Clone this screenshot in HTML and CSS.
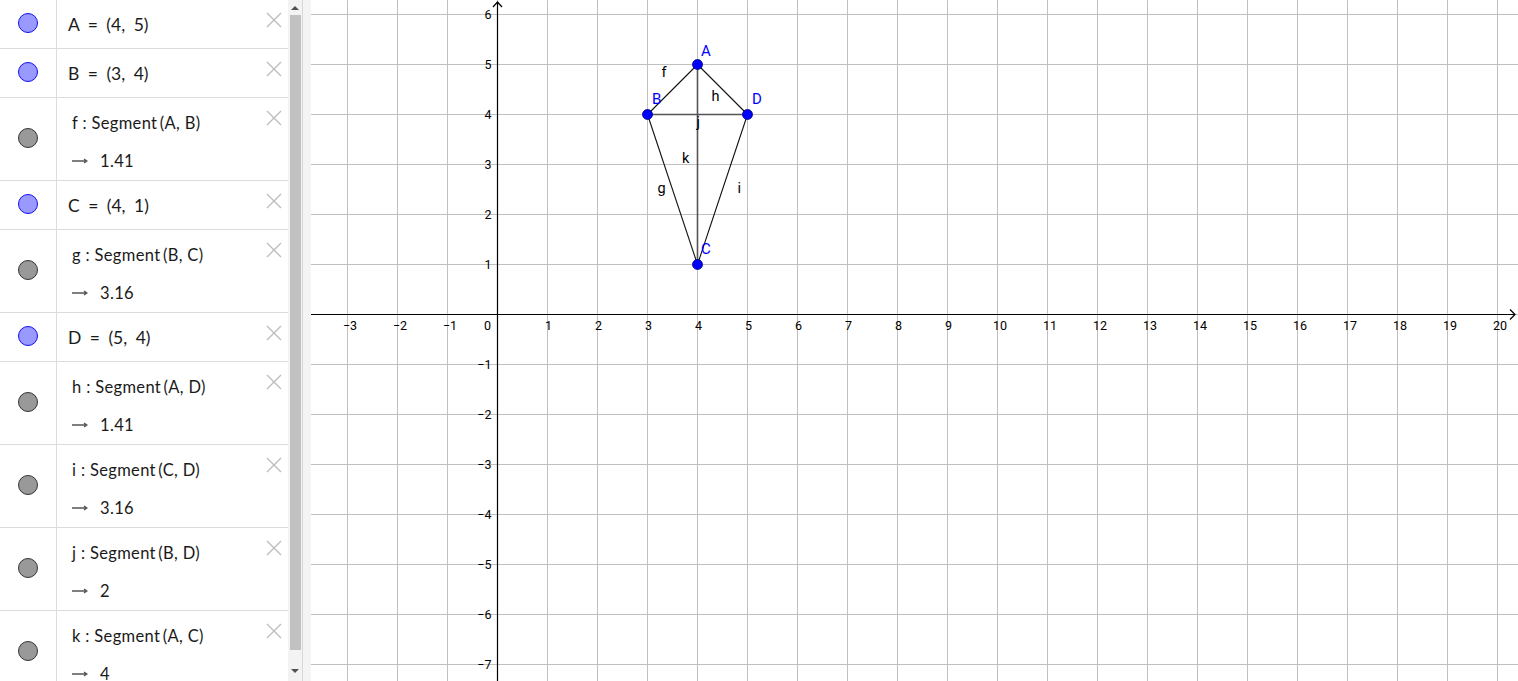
FILE: index.html
```html
<!DOCTYPE html>
<html>
<head>
<meta charset="utf-8">
<title>Kite</title>
<link rel="stylesheet" href="styles.css">
</head>
<body>
<div class="app">
  <aside class="algebra">
    <div class="list">
      <div class="row point">
        <div class="marker"><span class="dot pt"></span></div>
        <div class="body">A = (4, 5)</div>
        <svg class="close" viewBox="0 0 16 16"><path d="M1 1L15 15M15 1L1 15"/></svg>
      </div>
      <div class="row point">
        <div class="marker"><span class="dot pt"></span></div>
        <div class="body">B = (3, 4)</div>
        <svg class="close" viewBox="0 0 16 16"><path d="M1 1L15 15M15 1L1 15"/></svg>
      </div>
      <div class="row seg">
        <div class="marker"><span class="dot sg"></span></div>
        <div class="body">
          <div class="line">f : Segment&#8201;(A, B)</div>
          <div class="line"><svg class="arr" viewBox="0 0 16 6"><path d="M0 3H15M12 1L15 3L12 5"/></svg>1.41</div>
        </div>
        <svg class="close" viewBox="0 0 16 16"><path d="M1 1L15 15M15 1L1 15"/></svg>
      </div>
      <div class="row point">
        <div class="marker"><span class="dot pt"></span></div>
        <div class="body">C = (4, 1)</div>
        <svg class="close" viewBox="0 0 16 16"><path d="M1 1L15 15M15 1L1 15"/></svg>
      </div>
      <div class="row seg">
        <div class="marker"><span class="dot sg"></span></div>
        <div class="body">
          <div class="line">g : Segment&#8201;(B, C)</div>
          <div class="line"><svg class="arr" viewBox="0 0 16 6"><path d="M0 3H15M12 1L15 3L12 5"/></svg>3.16</div>
        </div>
        <svg class="close" viewBox="0 0 16 16"><path d="M1 1L15 15M15 1L1 15"/></svg>
      </div>
      <div class="row point">
        <div class="marker"><span class="dot pt"></span></div>
        <div class="body">D = (5, 4)</div>
        <svg class="close" viewBox="0 0 16 16"><path d="M1 1L15 15M15 1L1 15"/></svg>
      </div>
      <div class="row seg">
        <div class="marker"><span class="dot sg"></span></div>
        <div class="body">
          <div class="line">h : Segment&#8201;(A, D)</div>
          <div class="line"><svg class="arr" viewBox="0 0 16 6"><path d="M0 3H15M12 1L15 3L12 5"/></svg>1.41</div>
        </div>
        <svg class="close" viewBox="0 0 16 16"><path d="M1 1L15 15M15 1L1 15"/></svg>
      </div>
      <div class="row seg">
        <div class="marker"><span class="dot sg"></span></div>
        <div class="body">
          <div class="line">i : Segment&#8201;(C, D)</div>
          <div class="line"><svg class="arr" viewBox="0 0 16 6"><path d="M0 3H15M12 1L15 3L12 5"/></svg>3.16</div>
        </div>
        <svg class="close" viewBox="0 0 16 16"><path d="M1 1L15 15M15 1L1 15"/></svg>
      </div>
      <div class="row seg">
        <div class="marker"><span class="dot sg"></span></div>
        <div class="body">
          <div class="line">j : Segment&#8201;(B, D)</div>
          <div class="line"><svg class="arr" viewBox="0 0 16 6"><path d="M0 3H15M12 1L15 3L12 5"/></svg>2</div>
        </div>
        <svg class="close" viewBox="0 0 16 16"><path d="M1 1L15 15M15 1L1 15"/></svg>
      </div>
      <div class="row seg">
        <div class="marker"><span class="dot sg"></span></div>
        <div class="body">
          <div class="line">k : Segment&#8201;(A, C)</div>
          <div class="line"><svg class="arr" viewBox="0 0 16 6"><path d="M0 3H15M12 1L15 3L12 5"/></svg>4</div>
        </div>
        <svg class="close" viewBox="0 0 16 16"><path d="M1 1L15 15M15 1L1 15"/></svg>
      </div>
    </div>
    <div class="scroll">
      <span class="tri up"></span>
      <span class="thumb"></span>
      <span class="tri down"></span>
    </div>
  </aside>
  <div class="splitter"></div>
  <main class="graphics">
    <svg class="plot" width="1207" height="681" viewBox="0 0 1207 681">
      <defs>
        <pattern id="grid" x="36" y="14" width="50" height="50" patternUnits="userSpaceOnUse">
          <path class="gridline" d="M0.5 0V50M0 0.5H50"/>
        </pattern>
      </defs>
      <rect width="1207" height="681" fill="url(#grid)"/>
      <path class="axis" d="M0 314.5H1204M1199 309.5L1204 314.5L1199 319.5"/>
      <path class="axis" d="M186.5 681V2M182 7L186.5 2L191 7"/>
      <g class="tick xt">
        <text x="39" y="330">−3</text>
        <text x="89" y="330">−2</text>
        <text x="139" y="330">−1</text>
        <text x="176.5" y="330">0</text>
        <text x="237.5" y="330">1</text>
        <text x="287.5" y="330">2</text>
        <text x="337.5" y="330">3</text>
        <text x="387.5" y="330">4</text>
        <text x="437.5" y="330">5</text>
        <text x="487.5" y="330">6</text>
        <text x="537.5" y="330">7</text>
        <text x="587.5" y="330">8</text>
        <text x="637.5" y="330">9</text>
        <text x="689" y="330">10</text>
        <text x="739" y="330">11</text>
        <text x="789" y="330">12</text>
        <text x="839" y="330">13</text>
        <text x="889" y="330">14</text>
        <text x="939" y="330">15</text>
        <text x="989" y="330">16</text>
        <text x="1039" y="330">17</text>
        <text x="1089" y="330">18</text>
        <text x="1139" y="330">19</text>
        <text x="1189" y="330">20</text>
      </g>
      <g class="tick yt">
        <text x="180.5" y="19">6</text>
        <text x="180.5" y="69">5</text>
        <text x="180.5" y="119">4</text>
        <text x="180.5" y="169">3</text>
        <text x="180.5" y="219">2</text>
        <text x="180.5" y="269">1</text>
        <text x="180.5" y="369">−1</text>
        <text x="180.5" y="419">−2</text>
        <text x="180.5" y="469">−3</text>
        <text x="180.5" y="519">−4</text>
        <text x="180.5" y="569">−5</text>
        <text x="180.5" y="619">−6</text>
        <text x="180.5" y="669">−7</text>
      </g>
      <g class="segs">
        <line x1="386.5" y1="64.5" x2="336.5" y2="114.5"/>
        <line x1="336.5" y1="114.5" x2="386.5" y2="264.5"/>
        <line x1="386.5" y1="64.5" x2="436.5" y2="114.5"/>
        <line x1="386.5" y1="264.5" x2="436.5" y2="114.5"/>
      </g>
      <g class="segs thick">
        <line x1="336.5" y1="114.5" x2="436.5" y2="114.5"/>
        <line x1="386.5" y1="64.5" x2="386.5" y2="264.5"/>
      </g>
      <g class="seglabel">
        <text x="350.5" y="77">f</text>
        <text x="400.5" y="101">h</text>
        <text x="385.5" y="127">j</text>
        <text x="371" y="163">k</text>
        <text x="346.5" y="193">g</text>
        <text x="426.5" y="193">i</text>
      </g>
      <g class="pts">
        <circle cx="386.5" cy="64.5" r="5"/>
        <circle cx="336.5" cy="114.5" r="5"/>
        <circle cx="386.5" cy="264.5" r="5"/>
        <circle cx="436.5" cy="114.5" r="5"/>
      </g>
      <g class="ptlabel">
        <text x="390" y="56">A</text>
        <text x="341" y="104">B</text>
        <text x="441" y="104">D</text>
        <text x="390" y="254">C</text>
      </g>
    </svg>
  </main>
</div>
</body>
</html>
```

FILE: styles.css
```css
html, body {
  margin: 0;
  padding: 0;
  overflow: hidden;
  background: #fff;
}

body {
  font-family: Lato, "Open Sans", sans-serif;
  color: #1a1a1a;
}

.app {
  display: flex;
  width: 1518px;
  height: 681px;
}

/* ---------- algebra view ---------- */
.algebra {
  display: flex;
  flex: none;
  height: 681px;
}

.list {
  width: 288px;
  height: 681px;
  overflow: hidden;
  background: #fff;
}

.row {
  display: flex;
  border-bottom: 1px solid #dcdcdc;
}

.row.point {
  height: 48px;
}

.row.seg {
  height: 82px;
}

.marker {
  width: 56px;
  flex: none;
  border-right: 1px solid #dcdcdc;
  display: flex;
  align-items: center;
  justify-content: center;
  padding-bottom: 3px;
  box-sizing: content-box;
}

.row .marker {
  height: calc(100% - 3px);
}

.dot {
  width: 18px;
  height: 18px;
  border-radius: 50%;
  border: 1px solid;
}

.dot.pt {
  background: #9999ff;
  border-color: #1010ee;
}

.dot.sg {
  background: #999999;
  border-color: #333333;
}

.body {
  flex: 1;
  min-width: 0;
  white-space: nowrap;
}

.point .body {
  padding-left: 11px;
  padding-top: 1px;
  line-height: 48px;
  font-size: 17.5px;
  word-spacing: 4px;
}

.seg .body {
  padding-left: 15px;
  padding-top: 7px;
  font-size: 16.5px;
  letter-spacing: 0.35px;
}

.line {
  height: 36px;
  line-height: 36px;
  display: flex;
  align-items: center;
}

.line + .line {
  margin-top: 2px;
}

.arr {
  width: 16px;
  height: 6px;
  margin-right: 12px;
  fill: none;
  stroke: #555;
  stroke-width: 1.3;
}

.close {
  flex: none;
  width: 16px;
  height: 16px;
  margin: 12px 6px 0 0;
  fill: none;
  stroke: #bdbdbd;
  stroke-width: 1.4;
}

/* ---------- scrollbar ---------- */
.scroll {
  width: 14px;
  height: 681px;
  background: #f3f3f3;
  display: flex;
  flex-direction: column;
  align-items: center;
}

.tri {
  width: 0;
  height: 0;
  border-left: 4px solid transparent;
  border-right: 4px solid transparent;
}

.tri.up {
  margin-top: 6px;
  border-bottom: 4px solid #505050;
}

.tri.down {
  margin-top: 19px;
  border-top: 4px solid #505050;
}

.thumb {
  width: 11px;
  height: 635px;
  margin-top: 5px;
  background: #c1c1c1;
}

.splitter {
  flex: none;
  width: 8px;
  height: 681px;
  background: #f4f4f4;
  border-left: 1px solid #d8d8d8;
}

/* ---------- graphics view ---------- */
.graphics {
  flex: 1;
  height: 681px;
  overflow: hidden;
  background: #fff;
}

.plot {
  display: block;
}

.gridline {
  fill: none;
  stroke: #c0c0c0;
  stroke-width: 1;
}

.axis {
  fill: none;
  stroke: #000;
  stroke-width: 1.2;
}

.tick {
  font-family: Roboto, "DejaVu Sans", sans-serif;
  font-size: 12.5px;
  fill: #000;
}

.xt {
  text-anchor: middle;
}

.yt {
  text-anchor: end;
}

.segs line {
  stroke: #111;
  stroke-width: 1.1;
}

.segs.thick line {
  stroke: #555;
  stroke-width: 1.6;
}

.seglabel {
  font-family: Roboto, "DejaVu Sans", sans-serif;
  font-size: 14.5px;
  fill: #000;
}

.pts circle {
  fill: #0000ff;
  stroke: #00007a;
  stroke-width: 0.8;
}

.ptlabel {
  font-family: Roboto, "DejaVu Sans", sans-serif;
  font-size: 15px;
  fill: #0000ff;
}
```
